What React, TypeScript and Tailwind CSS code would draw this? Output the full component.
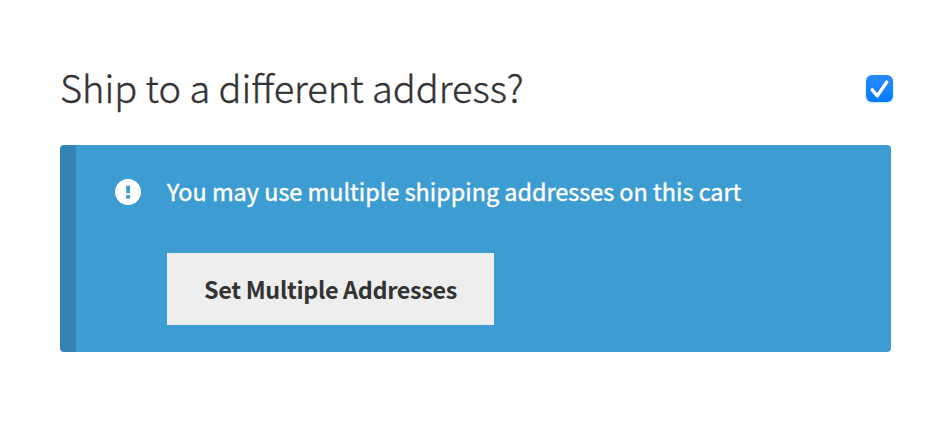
import { useState } from "react";

const App: React.FC = () => {
  const [checked, setChecked] = useState<boolean>(true);

  return (
    <div className="h-[421px] w-[948px] bg-white pt-[58px] pl-[60px] font-['Noto_Sans_CJK_SC','Noto_Sans',sans-serif]">
      <label className="flex h-[60px] w-[833px] cursor-pointer items-center justify-between">
        <span className="-mt-[3px] text-[38px] leading-[60px] font-light whitespace-nowrap text-[#333333] [-webkit-text-stroke:0.4px_#333333]">
          Ship to a different address?
        </span>
        <input
          type="checkbox"
          className="sr-only"
          checked={checked}
          onChange={(e) => setChecked(e.target.checked)}
        />
        <span className="flex size-[27px] items-center justify-center rounded-[6px] bg-linear-to-b from-[#2a8bff] to-[#007aff] shadow-[0_1px_2px_rgba(0,122,255,0.25)]">
          {checked && (
            <svg viewBox="0 0 27 27" className="size-[27px]" fill="none">
              <path
                d="M6.2 14.8 11.4 20.8 20.8 7"
                stroke="white"
                strokeWidth="3.3"
                strokeLinecap="round"
                strokeLinejoin="round"
              />
            </svg>
          )}
        </span>
      </label>

      <div className="mt-[27px] flex h-[207px] w-[831px] rounded-[4px] border-l-[16px] border-[#3484b3] bg-[#3d9cd2] pt-[28px] pl-[39px]">
        <svg viewBox="0 0 26 26" className="mt-[5.5px] size-[26px] shrink-0">
          <circle cx="13" cy="13" r="13" fill="white" />
          <path d="M11 6.7h4.2l-.4 7.6h-3.4z" fill="#3d9cd2" />
          <rect x="11" y="15.9" width="4.2" height="3.9" rx="1.2" fill="#3d9cd2" />
        </svg>
        <div className="ml-[26px]">
          <p className="text-[23.4px] leading-[36px] whitespace-nowrap text-white [-webkit-text-stroke:0.4px_white]">
            You may use multiple shipping addresses on this cart
          </p>
          <button className="mt-[44px] h-[72px] w-[327px] bg-[#eeeeee] pt-px text-[23.4px] font-bold tracking-[-0.35px] whitespace-nowrap text-[#333333]">
            Set Multiple Addresses
          </button>
        </div>
      </div>
    </div>
  );
};

export default App;
